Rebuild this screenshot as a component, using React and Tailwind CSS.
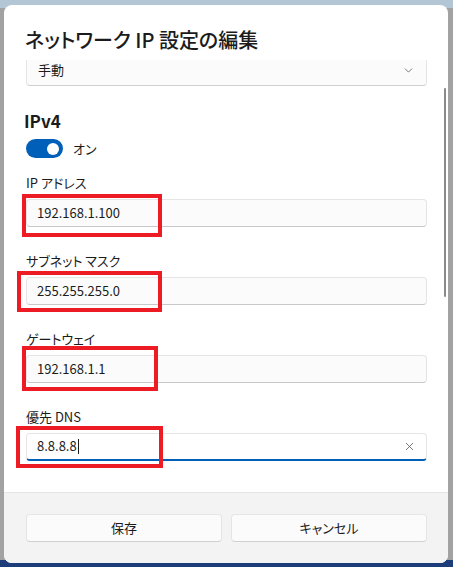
import { ChevronDown, X } from "lucide-react";

const jp = "font-['Noto_Sans_CJK_JP','Noto_Sans',sans-serif] [font-feature-settings:'palt']";

const fields = [
  { label: "IP アドレス", value: "192.168.1.100", mark: "-left-[4px] -top-[5px] w-[140px] h-[43px]" },
  { label: "サブネット マスク", value: "255.255.255.0", mark: "-left-[9px] -top-[6px] w-[145px] h-[41px]" },
  { label: "ゲートウェイ", value: "192.168.1.1", mark: "-left-[4px] -top-[9px] w-[136px] h-[45px]" },
  { label: "優先 DNS", value: "8.8.8.8", mark: "-left-[10px] -top-[7px] w-[147px] h-[42px]", focused: true },
];

export default function App() {
  return (
    <div
      className={`w-[453px] h-[567px] pt-[5px] pl-[4px] pr-[5px] pb-[4px] bg-[linear-gradient(to_bottom,#b3c6d6_0,#b3c6d6_8px,#a2a2a2_8px,#a2a2a2_560px,#1c3d7a_560px)] ${jp}`}
    >
      <div className="h-full flex flex-col rounded-[8px] bg-white overflow-hidden text-[#1b1b1b]">
        <div className="h-[55px] shrink-0 pl-[21px] pt-[21px]">
          <h1 className="text-[20px] leading-[28px] font-medium">ネットワーク IP 設定の編集</h1>
        </div>

        <div className="relative flex-1 overflow-hidden">
          <div className="absolute right-[2px] top-[28px] w-[2px] h-[209px] rounded-full bg-[#8a8a8a]" />
          <div className="-mt-[6px] pl-[22px] pr-[21px]">
            <div className="h-[32px] flex items-center justify-between rounded-[4px] border border-[#e5e5e5] border-b-[#cfcfcf] bg-[#fbfbfb] pl-[11px] pr-[11px]">
              <span className="text-[13px] leading-[16px]">手動</span>
              <ChevronDown size={13} strokeWidth={1.5} className="text-[#5c5c5c]" />
            </div>

            <h2 className="mt-[23px] -ml-[2px] text-[17px] leading-[24px] font-semibold">IPv4</h2>

            <div className="mt-[6px] flex items-center gap-[10px]">
              <div className="w-[37px] h-[19px] rounded-full bg-[#005fb8] flex items-center justify-end pr-[4px]">
                <div className="w-[12px] h-[12px] rounded-full bg-white" />
              </div>
              <span className="text-[13px]">オン</span>
            </div>

            {fields.map((f, i) => (
              <div key={f.label} className={i === 0 ? "mt-[15px]" : "mt-[25px]"}>
                <div className="text-[13px] leading-[18px]">{f.label}</div>
                <div className="relative mt-[7px]">
                  <div
                    className={`h-[28px] flex items-center justify-between rounded-[4px] border pl-[10px] pr-[10px] text-[13px] ${
                      f.focused
                        ? "bg-white border-[#e5e5e5] border-b-2 border-b-[#005fb8]"
                        : "bg-[#fbfbfb] border-[#e5e5e5] border-b-[#c8c8c8]"
                    }`}
                  >
                    <span className="flex items-center">
                      {f.value}
                      {f.focused && <span className="ml-[1px] inline-block w-px h-[15px] bg-[#1b1b1b]" />}
                    </span>
                    {f.focused && <X size={13} strokeWidth={1.5} className="text-[#5c5c5c]" />}
                  </div>
                  <div className={`absolute border-[4px] border-[#ed1c24] ${f.mark}`} />
                </div>
              </div>
            ))}
          </div>
        </div>

        <div className="h-[71px] shrink-0 border-t border-[#e5e5e5] bg-[#f3f3f3] flex gap-[9px] pl-[22px] pr-[21px] pt-[21px]">
          <button className="flex-1 h-[28px] rounded-[4px] border border-[#e5e5e5] border-b-[#d0d0d0] bg-[#fbfbfb] text-[13px]">保存</button>
          <button className="flex-1 h-[28px] rounded-[4px] border border-[#e5e5e5] border-b-[#d0d0d0] bg-[#fbfbfb] text-[13px]">キャンセル</button>
        </div>
      </div>
    </div>
  );
}
